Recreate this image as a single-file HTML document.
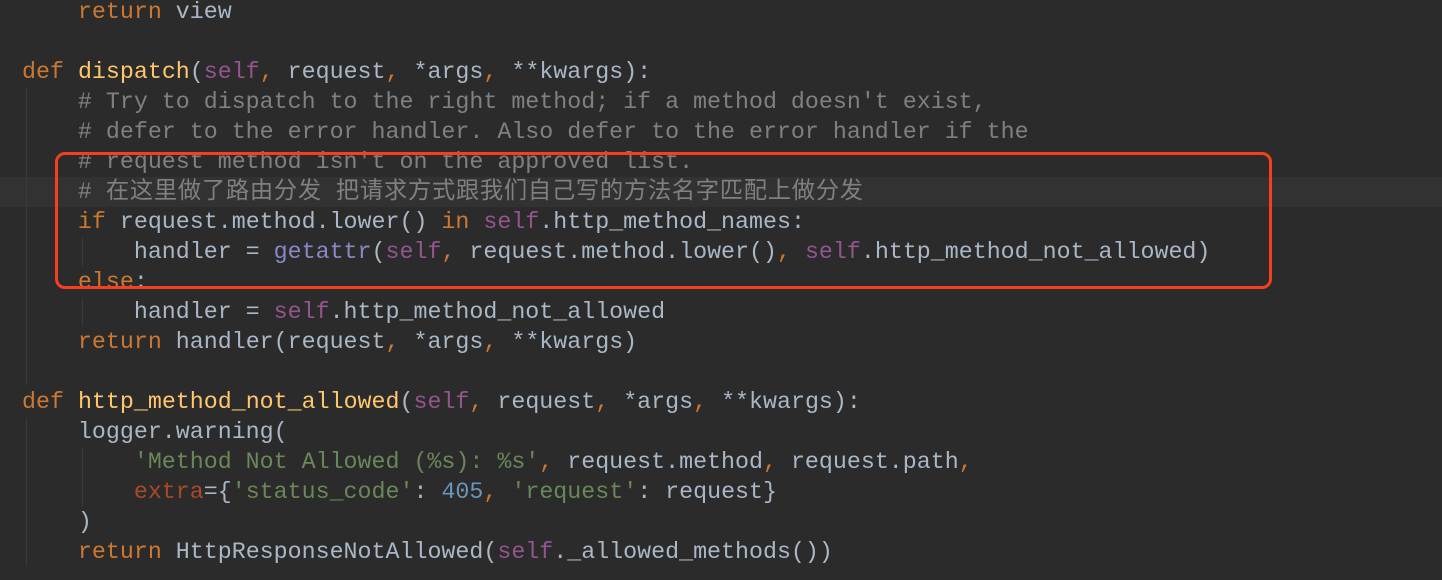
<!DOCTYPE html>
<html><head><meta charset="utf-8"><style>
html,body{margin:0;padding:0;background:#2b2b2b;width:1442px;height:580px;overflow:hidden;position:relative}
.l{position:absolute;left:22px;height:30px;line-height:30px;font-family:"Liberation Mono","Noto Sans CJK SC",monospace;font-size:23.3px;color:#a9b7c6;white-space:pre}
.k{color:#cc7832}.f{color:#ffc66d}.s{color:#94558d}.c{color:#808080}.b{color:#8888c6}.st{color:#6a8759}.n{color:#6897bb}.kw{color:#aa4926}
.cj{letter-spacing:0.7px}
.g{position:absolute;width:1px;background:#3b3b3b}
</style></head><body>
<div style="position:absolute;left:0;top:177px;width:1442px;height:30px;background:#323232"></div>
<div class="g" style="left:26px;top:88px;height:296px"></div>
<div class="g" style="left:82px;top:238px;height:28px"></div>
<div class="g" style="left:82px;top:298px;height:28px"></div>
<div class="g" style="left:26px;top:418px;height:148px"></div>
<div class="g" style="left:82px;top:448px;height:58px"></div>
<div class="l" style="top:-3px">    <span class="k">return</span> view</div>
<div class="l" style="top:57px"><span class="k">def</span> <span class="f">dispatch</span>(<span class="s">self</span><span class="k">,</span> request<span class="k">,</span> *args<span class="k">,</span> **kwargs):</div>
<div class="l c" style="top:87px">    # Try to dispatch to the right method; if a method doesn't exist,</div>
<div class="l c" style="top:117px">    # defer to the error handler. Also defer to the error handler if the</div>
<div class="l c" style="top:147px">    # request method isn't on the approved list.</div>
<div class="l c" style="top:177px">    # <span class="cj">在这里做了路由分发</span> <span class="cj">把请求方式跟我们自己写的方法名字匹配上做分发</span></div>
<div class="l" style="top:207px">    <span class="k">if</span> request.method.lower() <span class="k">in</span> <span class="s">self</span>.http_method_names:</div>
<div class="l" style="top:237px">        handler = <span class="b">getattr</span>(<span class="s">self</span><span class="k">,</span> request.method.lower()<span class="k">,</span> <span class="s">self</span>.http_method_not_allowed)</div>
<div class="l" style="top:267px">    <span class="k">else</span>:</div>
<div class="l" style="top:297px">        handler = <span class="s">self</span>.http_method_not_allowed</div>
<div class="l" style="top:327px">    <span class="k">return</span> handler(request<span class="k">,</span> *args<span class="k">,</span> **kwargs)</div>
<div class="l" style="top:387px"><span class="k">def</span> <span class="f">http_method_not_allowed</span>(<span class="s">self</span><span class="k">,</span> request<span class="k">,</span> *args<span class="k">,</span> **kwargs):</div>
<div class="l" style="top:417px">    logger.warning(</div>
<div class="l" style="top:447px">        <span class="st">'Method Not Allowed (%s): %s'</span><span class="k">,</span> request.method<span class="k">,</span> request.path<span class="k">,</span></div>
<div class="l" style="top:477px">        <span class="kw">extra</span>={<span class="st">'status_code'</span>: <span class="n">405</span><span class="k">,</span> <span class="st">'request'</span>: request}</div>
<div class="l" style="top:507px">    )</div>
<div class="l" style="top:537px">    <span class="k">return</span> HttpResponseNotAllowed(<span class="s">self</span>._allowed_methods())</div>
<div style="position:absolute;left:55px;top:152px;width:1211px;height:131px;border:3px solid #f5401f;border-radius:10px"></div>
</body></html>
